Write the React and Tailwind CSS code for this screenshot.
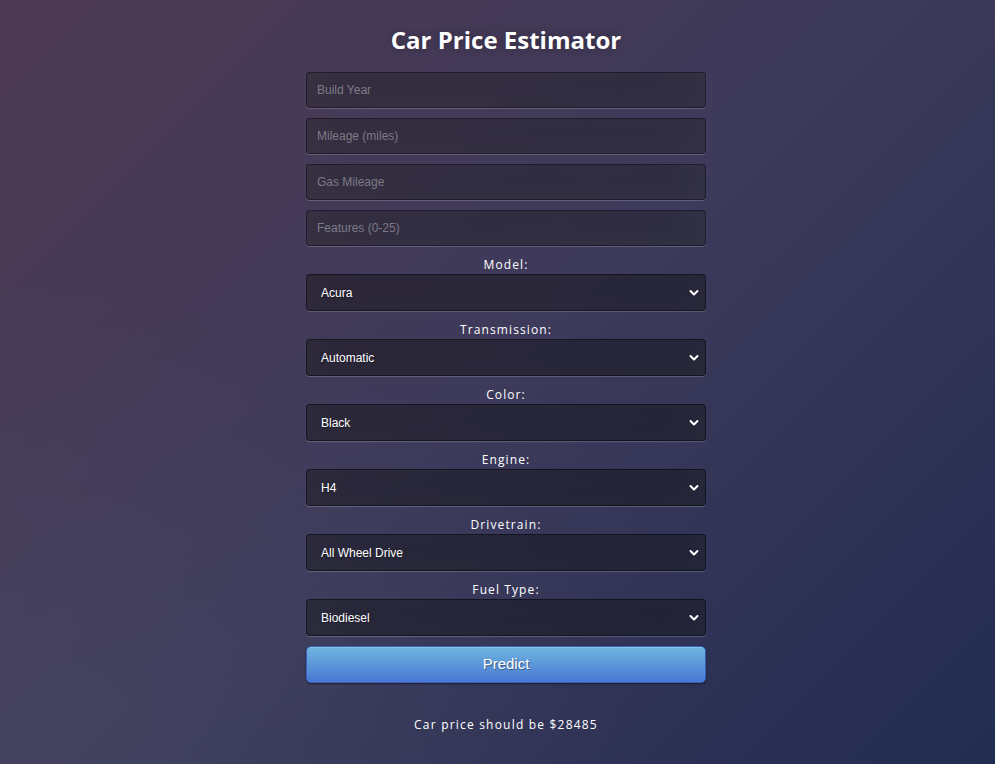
import React from "react";

const inputs = ["Build Year", "Mileage (miles)", "Gas Mileage", "Features (0-25)"];
const selects = [
  ["Model:", "Acura"],
  ["Transmission:", "Automatic"],
  ["Color:", "Black"],
  ["Engine:", "H4"],
  ["Drivetrain:", "All Wheel Drive"],
  ["Fuel Type:", "Biodiesel"],
];

function Chevron() {
  return (
    <svg
      className="pointer-events-none absolute right-[7px] top-1/2 -translate-y-1/2"
      width="10"
      height="7"
      viewBox="0 0 10 7"
      fill="none"
    >
      <path d="M1.5 1.5 L5 5 L8.5 1.5" stroke="#ffffff" strokeWidth="2" strokeLinecap="round" strokeLinejoin="round" />
    </svg>
  );
}

export default function App() {
  return (
    <div className="min-h-[764px] w-full bg-[radial-gradient(ellipse_at_0%_100%,rgba(104,128,138,0.1)_10%,rgba(104,128,138,0)_45%),linear-gradient(135deg,#4e3a52_0%,#3d3a5b_50%,#222c51_100%)] font-['Open_Sans',sans-serif]">
      <div className="flex justify-center pl-[17px]">
        <div className="w-[400px] pt-[23px]">
          <h1 className="mb-[15px] text-center text-[24px] leading-[34px] font-bold text-white [text-shadow:0_0_10px_rgba(0,0,0,0.3)]">
            Car Price Estimator
          </h1>
          {inputs.map((p) => (
            <input
              key={p}
              placeholder={p}
              className="mb-[10px] block h-[36px] w-full rounded-[4px] border border-black/30 bg-black/30 px-[10px] font-['Liberation_Sans',Arial,sans-serif] text-[12px] text-white placeholder:text-[#7d7a86] shadow-[inset_0_-5px_45px_rgba(100,100,100,0.2),0_1px_1px_rgba(255,255,255,0.2)] outline-none"
            />
          ))}
          {selects.map(([label, value]) => (
            <div key={label} className="mb-[10px]">
              <div className="h-[18px] text-center text-[12px] leading-[18px] tracking-[1.1px] text-white">
                {label}
              </div>
              <div className="relative">
                <select
                  defaultValue={value}
                  className="block h-[37px] w-full appearance-none rounded-[4px] border border-black/40 bg-black/40 pl-[14px] font-['Liberation_Sans',Arial,sans-serif] text-[12px] text-white [text-shadow:1px_1px_1px_rgba(0,0,0,0.3)] shadow-[inset_0_-5px_45px_rgba(100,100,100,0.15),0_1px_1px_rgba(255,255,255,0.2)] outline-none"
                >
                  <option className="bg-[#27263a]">{value}</option>
                </select>
                <Chevron />
              </div>
            </div>
          ))}
          <button className="block h-[37px] w-full rounded-[5px] border border-[#3762bc] bg-[linear-gradient(to_bottom,#6eb6de,#4a77d4)] font-['Liberation_Sans',Arial,sans-serif] text-[15px] text-white [text-shadow:1px_1px_1px_rgba(0,0,0,0.4)] shadow-[inset_0_1px_0_rgba(255,255,255,0.2),0_1px_2px_rgba(0,0,0,0.5)]">
            Predict
          </button>
          <div className="mt-[33px] text-center text-[12px] leading-[17px] tracking-[1.2px] text-white">
            Car price should be $28485
          </div>
        </div>
      </div>
    </div>
  );
}
